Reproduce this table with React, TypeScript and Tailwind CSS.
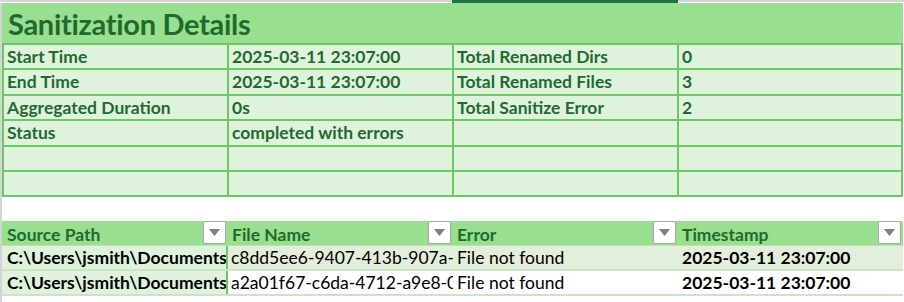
import React from 'react'

const summaryRows: [string, string, string, string][] = [
  ['Start Time', '2025-03-11 23:07:00', 'Total Renamed Dirs', '0'],
  ['End Time', '2025-03-11 23:07:00', 'Total Renamed Files', '3'],
  ['Aggregated Duration', '0s', 'Total Sanitize Error', '2'],
  ['Status', 'completed with errors', '', ''],
  ['', '', '', ''],
  ['', '', '', ''],
]

const errorRows = [
  {
    path: 'C:\\Users\\jsmith\\Documents\\Projects\\report.docx',
    file: 'c8dd5ee6-9407-413b-907a-3f1c2e8b9d41.docx',
    error: 'File not found',
    time: '2025-03-11 23:07:00',
  },
  {
    path: 'C:\\Users\\jsmith\\Documents\\Projects\\notes.txt',
    file: 'a2a01f67-c6da-4712-a9e8-0b5d7c3e2f19.txt',
    error: 'File not found',
    time: '2025-03-11 23:07:00',
  },
]

function FilterButton() {
  return (
    <div className="absolute right-[2px] top-0 w-[23px] h-[23px] bg-white border border-[#a6a6a6] rounded-[2px] flex items-center justify-center">
      <svg width="11" height="7" viewBox="0 0 11 7">
        <path d="M0 0 H11 L5.5 7 Z" fill="#7f7f7f" />
      </svg>
    </div>
  )
}

export default function App() {
  const tableCols = 'grid grid-cols-[226px_225px_225px_225px]'

  return (
    <div
      className="w-[904px] h-[302px] bg-white overflow-hidden flex flex-col"
      style={{ fontFamily: 'Lato, "Open Sans", sans-serif' }}
    >
      {/* column header edge */}
      <div className="h-[3px] flex shrink-0">
        <div className="w-[452px] border-t-2 border-[#d4d4d4]" />
        <div className="w-[226px] bg-[#217346]" />
        <div className="flex-1 border-t-2 border-[#d4d4d4]" />
      </div>

      <div className="flex flex-1">
        <div className="w-[2px] bg-[#d4d4d4]" />

        <div className="w-[901px] flex flex-col">
          {/* Summary block */}
          <div className="bg-[#6cc766] pr-[2px] pb-[2px] pl-[2px]">
            <div className="h-[40px] -mx-[2px] bg-[#98df90] flex items-center px-[6px] mb-[2px]">
              <span className="text-[29px] font-bold text-[#1f6a2e] leading-none tracking-[-0.3px]">
                Sanitization Details
              </span>
            </div>
            <div className="grid grid-cols-[223px_223px_223px_222px] gap-[2px] auto-rows-[23.4px]">
              {summaryRows.flatMap((row, r) =>
                row.map((cell, c) => (
                  <div
                    key={`${r}-${c}`}
                    className="bg-[#dff3dc] px-[3px] flex items-center text-[17.5px] font-bold text-[#1f6a2e] whitespace-nowrap overflow-hidden leading-none"
                  >
                    {cell}
                  </div>
                ))
              )}
            </div>
          </div>

          <div className="h-[24px]" />

          {/* Errors table */}
          <div className="flex flex-col">
            <div className={`${tableCols} h-[25px] bg-[#98df90] border-b border-[#b9e3b0]`}>
              {['Source Path', 'File Name', 'Error', 'Timestamp'].map((h, i) => (
                <div
                  key={h}
                  className={`relative ${i === 0 ? 'px-[5px]' : 'px-[4px]'} flex items-center text-[17.5px] font-bold text-[#1f6a2e] leading-none pt-[2px]`}
                >
                  {h}
                  <FilterButton />
                </div>
              ))}
            </div>
            {errorRows.map((row, i) => (
              <div
                key={i}
                className={`${tableCols} h-[25px] border-b-2 border-[#c6e8bf] ${i === 0 ? 'bg-[#e3efda]' : 'bg-white'}`}
              >
                <div className="bg-[#dff3dc] border-r-2 border-[#6cc766] px-[5px] flex items-center text-[17.5px] font-bold text-black whitespace-nowrap overflow-hidden leading-none">
                  {row.path}
                </div>
                <div className="px-[3px] flex items-center text-[17.5px] text-black whitespace-nowrap overflow-hidden leading-none">
                  {row.file}
                </div>
                <div className="px-[4px] flex items-center text-[17.5px] text-black whitespace-nowrap overflow-hidden leading-none">
                  {row.error}
                </div>
                <div className="px-[4px] flex items-center text-[17.5px] font-bold text-black whitespace-nowrap overflow-hidden leading-none">
                  {row.time}
                </div>
              </div>
            ))}
          </div>
        </div>
      </div>
    </div>
  )
}
